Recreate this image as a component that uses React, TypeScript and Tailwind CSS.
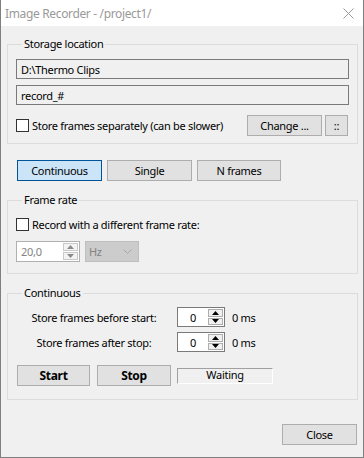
import React from "react";

const FONT = { fontFamily: '"Noto Sans", "Open Sans", sans-serif' };

function CheckBox({ label }: { label: string }) {
    return (
        <label className="flex items-center h-[15px]">
            <span className="w-[13px] h-[13px] border border-[#333333] bg-white shrink-0"/>
            <span className="ml-[3px] text-black">{label}</span>
        </label>
    );
}

function Btn({ children, className }: { children: React.ReactNode; className: string }) {
    return (
        <button className={`h-[21px] flex items-center justify-center border border-[#adadad] bg-[#e1e1e1] text-black ${className}`}>
            {children}
        </button>
    );
}

// tiny up / down arrows used by the numeric spin boxes
function SpinArrows({ disabled }: { disabled?: boolean }) {
    const fill = disabled ? "#8a8a8a" : "#000000";
    return (
        <div className="flex flex-col w-[15px] my-[1px] mr-[1px] gap-[1px]">
            <div className={disabled ? "flex-1 flex items-center justify-center border border-[#c9c9c9] bg-[#f3f3f3]" : "flex-1 flex items-center justify-center border border-[#adadad] bg-[#f0f0f0]"}>
                <svg width="7" height="4" viewBox="0 0 7 4"><path d="M3.5 0 L7 4 L0 4 Z" fill={fill}/></svg>
            </div>
            <div className={disabled ? "flex-1 flex items-center justify-center border border-[#c9c9c9] bg-[#f3f3f3]" : "flex-1 flex items-center justify-center border border-[#adadad] bg-[#f0f0f0]"}>
                <svg width="7" height="4" viewBox="0 0 7 4"><path d="M0 0 L7 0 L3.5 4 Z" fill={fill}/></svg>
            </div>
        </div>
    );
}

function MsRow({ label }: { label: string }) {
    return (
        <div className="flex items-center h-[20px]">
            <div className="w-[156px] text-center">{label}</div>
            <div className="ml-[5px] flex w-[48px] h-[20px] border border-[#7a7a7a] bg-white">
                <div className="flex-1 flex items-center justify-center">0</div>
                <SpinArrows/>
            </div>
            <span className="ml-[7px]">0 ms</span>
        </div>
    );
}

export default function App() {
    return (
        <div style={FONT} className="w-[364px] h-[458px] flex flex-col bg-[#f0f0f0] border-l border-r border-b border-[#7f7f7f] text-[11px] leading-[15px] tracking-[-0.3px] text-black overflow-hidden">
            {/* title bar */}
            <div className="h-[26px] shrink-0 bg-white flex items-center justify-between pl-[4px] pr-[9px]">
                <span className="text-[12px] tracking-[-0.35px] text-[#999999]">Image Recorder - /project1/</span>
                <svg width="11" height="11" viewBox="0 0 11 11">
                    <path d="M0.5 0.5 L10.5 10.5 M10.5 0.5 L0.5 10.5" stroke="#999999" strokeWidth="1"/>
                </svg>
            </div>

            {/* Storage location */}
            <fieldset className="ml-[6px] w-[351px] mt-[10px] border border-[#dcdcdc] px-[8px] pb-[7px]">
                <legend className="ml-[6px] px-[2px] leading-[16px]">Storage location</legend>
                <div className="mt-[7px] h-[20px] border border-[#7a7a7a] bg-[#f0f0f0] flex items-center pl-[4px]">D:\Thermo Clips</div>
                <div className="mt-[6px] h-[20px] border border-[#7a7a7a] bg-[#f0f0f0] flex items-center pl-[4px]">record_#</div>
                <div className="mt-[10px] flex items-center">
                    <CheckBox label="Store frames separately (can be slower)"/>
                    <Btn className="ml-auto w-[75px]">Change ...</Btn>
                    <Btn className="ml-[3px] w-[23px] mr-[1px]">::</Btn>
                </div>
            </fieldset>

            {/* mode buttons */}
            <div className="mt-[16px] ml-[16px] flex gap-[5px]">
                <button className="h-[21px] w-[85px] border border-[#005499] bg-[#cce4f7] flex items-center justify-center">Continuous</button>
                <Btn className="w-[85px]">Single</Btn>
                <Btn className="w-[84px]">N frames</Btn>
            </div>

            {/* Frame rate */}
            <fieldset className="ml-[6px] w-[351px] mt-[11px] border border-[#dcdcdc] px-[8px] pb-[11px]">
                <legend className="ml-[6px] px-[2px] leading-[16px]">Frame rate</legend>
                <div className="mt-[9px]">
                    <CheckBox label="Record with a different frame rate:"/>
                </div>
                <div className="mt-[9px] flex gap-[5px]">
                    <div className="flex w-[64px] h-[21px] border border-[#b0b0b0] bg-white text-[#838383]">
                        <div className="flex-1 flex items-center pl-[4px]">20,0</div>
                        <SpinArrows disabled/>
                    </div>
                    <div className="flex items-center w-[54px] h-[21px] border border-[#bfbfbf] bg-[#cccccc] text-[#838383] pl-[3px] pr-[6px]">
                        <span>Hz</span>
                        <svg className="ml-auto" width="9" height="5" viewBox="0 0 9 5">
                            <path d="M0.5 0.5 L4.5 4.5 L8.5 0.5" stroke="#a8a8a8" fill="none" strokeWidth="1"/>
                        </svg>
                    </div>
                </div>
            </fieldset>

            {/* Continuous */}
            <fieldset className="ml-[6px] w-[351px] mt-[11px] border border-[#dcdcdc] px-[8px] pb-[13px]">
                <legend className="ml-[6px] px-[2px] leading-[16px]">Continuous</legend>
                <div className="mt-[6px] flex flex-col gap-[5px]">
                    <MsRow label="Store frames before start:"/>
                    <MsRow label="Store frames after stop:"/>
                </div>
                <div className="mt-[13px] flex items-center pl-[1px]">
                    <Btn className="w-[73px] font-bold text-[12px]">Start</Btn>
                    <Btn className="ml-[7px] w-[74px] font-bold text-[12px]">Stop</Btn>
                    <div className="ml-[6px] w-[96px] h-[16px] border-t border-l border-[#a0a0a0] border-b-white border-r-white border-b border-r flex items-center justify-center pb-[2px]">
                        Waiting
                    </div>
                </div>
            </fieldset>

            <div className="mt-[24px] flex justify-end pr-[6px]">
                <Btn className="w-[75px]">Close</Btn>
            </div>
        </div>
    );
}
